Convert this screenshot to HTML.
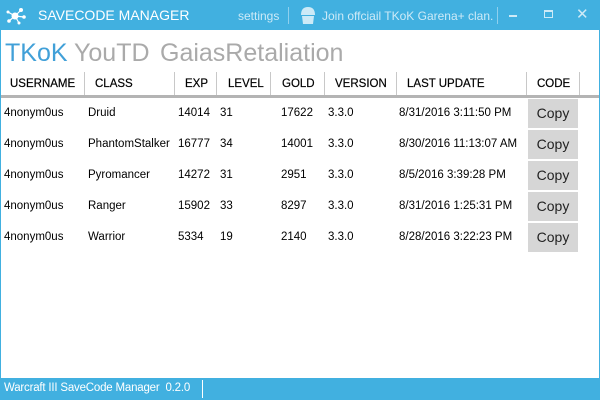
<!DOCTYPE html>
<html><head><meta charset="utf-8"><style>
*{margin:0;padding:0;box-sizing:border-box}
body{width:600px;height:400px;overflow:hidden;background:#fff;font-family:"Liberation Sans","DejaVu Sans",sans-serif;position:relative}
.a{position:absolute;white-space:nowrap}
#frame{position:absolute;left:0;top:0;width:600px;height:400px;border:1px solid #41b0e0}
#title{left:0;top:0;width:600px;height:30px;background:#41b0e0}
.tw{color:#fff;font-size:14px;top:7px}
.tl{color:#cdeaf7;font-size:12px;top:9px}
.h{font-size:11.5px;color:#000;top:78px;-webkit-text-stroke:0.2px #000}
.sep{position:absolute;top:72px;width:1px;height:23px;background:#c8c8c8}
.c{font-size:11.5px;color:#000}
.btn{position:absolute;left:528px;width:50px;height:29px;background:#d6d6d6;color:#222;font-size:14px;text-align:center;line-height:29px}
</style></head><body>
<div class="a" id="title"></div>
<svg class="a" style="left:5px;top:5px" width="22" height="20" viewBox="0 0 22 20">
<g stroke="#fff" stroke-width="1.2"><line x1="10" y1="11" x2="16" y2="5"/><line x1="10" y1="11" x2="19" y2="12"/><line x1="10" y1="11" x2="4" y2="16"/><line x1="10" y1="11" x2="3" y2="7"/><line x1="10" y1="11" x2="14" y2="18"/></g>
<g fill="#fff"><circle cx="10" cy="11" r="3.5"/><circle cx="16" cy="5" r="2"/><circle cx="19" cy="12" r="1.8"/><circle cx="4" cy="16" r="1.8"/><circle cx="3" cy="7" r="1.5"/><circle cx="14" cy="18" r="1.5"/></g></svg>
<div class="a tw" style="left:38px">SAVECODE MANAGER</div>
<div class="a tl" style="left:238px">settings</div>
<div class="a" style="left:288px;top:7px;width:1px;height:17px;background:#8fd0ee"></div>
<svg class="a" style="left:298px;top:5px" width="20" height="20" viewBox="0 0 20 20"><path d="M3 10 Q3 2 10 2 Q17 2 17 10Z" fill="#cdeaf7"/><path d="M4 11 H16 L15 19 H5Z" fill="#cdeaf7"/></svg>
<div class="a tl" style="left:322px">Join offciail TKoK Garena+ clan.</div>
<div class="a" style="left:497px;top:7px;width:1px;height:17px;background:#8fd0ee"></div>
<div class="a" style="left:509px;top:15px;width:8px;height:2px;background:#cdeaf7"></div>
<div class="a" style="left:544px;top:10px;width:9px;height:8px;border:1px solid #cdeaf7;border-top-width:2px"></div>
<div class="a" style="left:576px;top:5px;color:#cdeaf7;font-size:15px">✕</div>

<div class="a" style="left:5px;top:39px;font-size:25px;color:#41a0d8">TKoK</div>
<div class="a" style="left:74px;top:39px;font-size:25px;color:#aaa">YouTD</div>
<div class="a" style="left:160px;top:39px;font-size:25px;color:#aaa">GaiasRetaliation</div>

<div class="a h" style="left:10px">USERNAME</div><div class="sep" style="left:84px"></div>
<div class="a h" style="left:95px">CLASS</div><div class="sep" style="left:174px"></div>
<div class="a h" style="left:185px">EXP</div><div class="sep" style="left:216px"></div>
<div class="a h" style="left:228px">LEVEL</div><div class="sep" style="left:270px"></div>
<div class="a h" style="left:282px">GOLD</div><div class="sep" style="left:324px"></div>
<div class="a h" style="left:335px">VERSION</div><div class="sep" style="left:396px"></div>
<div class="a h" style="left:407px">LAST UPDATE</div><div class="sep" style="left:526px"></div>
<div class="a h" style="left:537px">CODE</div><div class="sep" style="left:579px"></div>
<div class="a" style="left:1px;top:95px;width:598px;height:3px;background:#b4b4b4"></div>

<div class="a c" style="left:4px;top:107px">4nonym0us</div><div class="a c" style="left:88px;top:107px">Druid</div><div class="a c" style="left:178px;top:107px">14014</div><div class="a c" style="left:220px;top:107px">31</div><div class="a c" style="left:281px;top:107px">17622</div><div class="a c" style="left:328px;top:107px">3.3.0</div><div class="a c" style="left:399px;top:107px">8/31/2016 3:11:50 PM</div><div class="btn" style="top:99px">Copy</div>
<div class="a c" style="left:4px;top:138px">4nonym0us</div><div class="a c" style="left:88px;top:138px">PhantomStalker</div><div class="a c" style="left:178px;top:138px">16777</div><div class="a c" style="left:220px;top:138px">34</div><div class="a c" style="left:281px;top:138px">14001</div><div class="a c" style="left:328px;top:138px">3.3.0</div><div class="a c" style="left:399px;top:138px">8/30/2016 11:13:07 AM</div><div class="btn" style="top:130px">Copy</div>
<div class="a c" style="left:4px;top:169px">4nonym0us</div><div class="a c" style="left:88px;top:169px">Pyromancer</div><div class="a c" style="left:178px;top:169px">14272</div><div class="a c" style="left:220px;top:169px">31</div><div class="a c" style="left:281px;top:169px">2951</div><div class="a c" style="left:328px;top:169px">3.3.0</div><div class="a c" style="left:399px;top:169px">8/5/2016 3:39:28 PM</div><div class="btn" style="top:161px">Copy</div>
<div class="a c" style="left:4px;top:200px">4nonym0us</div><div class="a c" style="left:88px;top:200px">Ranger</div><div class="a c" style="left:178px;top:200px">15902</div><div class="a c" style="left:220px;top:200px">33</div><div class="a c" style="left:281px;top:200px">8297</div><div class="a c" style="left:328px;top:200px">3.3.0</div><div class="a c" style="left:399px;top:200px">8/31/2016 1:25:31 PM</div><div class="btn" style="top:192px">Copy</div>
<div class="a c" style="left:4px;top:231px">4nonym0us</div><div class="a c" style="left:88px;top:231px">Warrior</div><div class="a c" style="left:178px;top:231px">5334</div><div class="a c" style="left:220px;top:231px">19</div><div class="a c" style="left:281px;top:231px">2140</div><div class="a c" style="left:328px;top:231px">3.3.0</div><div class="a c" style="left:399px;top:231px">8/28/2016 3:22:23 PM</div><div class="btn" style="top:223px">Copy</div>

<div class="a" style="left:0;top:378px;width:600px;height:22px;background:#41b0e0"></div>
<div class="a" style="left:4px;top:382px;color:#fff;font-size:11.5px;letter-spacing:-0.2px">Warcraft III SaveCode Manager&nbsp; 0.2.0</div>
<div class="a" style="left:202px;top:380px;width:1px;height:18px;background:#fff"></div>
<div id="frame"></div>
</body></html>
